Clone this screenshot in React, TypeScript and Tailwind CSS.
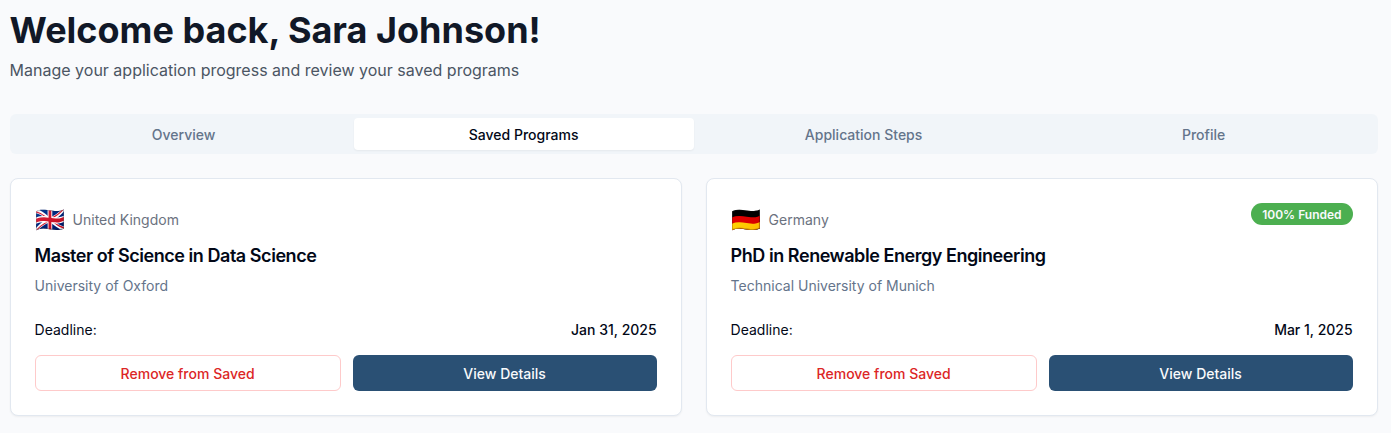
import React from "react";

type Program = {
  flag: string;
  country: string;
  title: string;
  university: string;
  deadline: string;
  badge?: string;
};

const programs: Program[] = [
  { flag: "🇬🇧", country: "United Kingdom", title: "Master of Science in Data Science", university: "University of Oxford", deadline: "Jan 31, 2025" },
  { flag: "🇩🇪", country: "Germany", title: "PhD in Renewable Energy Engineering", university: "Technical University of Munich", deadline: "Mar 1, 2025", badge: "100% Funded" },
];

const tabs = ["Overview", "Saved Programs", "Application Steps", "Profile"];

function ProgramCard({ program }: { program: Program }) {
  return (
    <article className="rounded-lg border border-[#e2e8f0] bg-white p-6 shadow-xs">
      <div className="flex items-start justify-between">
        <div className="flex h-[33px] items-center pt-px">
          <span className="mr-2 text-2xl leading-8">{program.flag}</span>
          <span className="text-sm text-[#6b7280]">{program.country}</span>
        </div>
        {program.badge && (
          <span className="rounded-full border border-transparent bg-[#4caf50] px-2.5 pt-[3px] pb-px text-xs font-semibold text-[#f8fafc]">{program.badge}</span>
        )}
      </div>
      <h3 className="mt-1.5 text-lg leading-7 font-semibold tracking-tight text-[#020817]">{program.title}</h3>
      <p className="mt-1.5 text-sm text-[#64748b]">{program.university}</p>
      <div className="mt-6 flex justify-between text-sm text-[#020817]">
        <span>Deadline:</span>
        <span className="font-medium">{program.deadline}</span>
      </div>
      <div className="mt-[15px] flex gap-3">
        <button className="h-9 flex-1 rounded-md border border-[#fecaca] bg-white pt-0.5 text-sm font-medium text-[#dc2626]">Remove from Saved</button>
        <button className="h-9 flex-1 rounded-md bg-[#2a5074] pt-0.5 text-sm font-medium text-[#f8fafc]">View Details</button>
      </div>
    </article>
  );
}

export default function App() {
  return (
    <main className="h-[433px] overflow-hidden bg-[#f9fafc] pr-[13.4px] pl-[9.6px] font-['Inter',sans-serif]">
      <h1 className="pt-[10.4px] text-4xl leading-10 font-bold text-[#111827]">Welcome back, Sara Johnson!</h1>
      <p className="mt-2 text-base text-[#4b5563]">Manage your application progress and review your saved programs</p>
      <nav className="mt-8 grid h-10 grid-cols-4 rounded-md bg-[#f1f5f9] p-1">
        {tabs.map((tab, index) => (
          <button key={tab} className={index === 1 ? "rounded-sm bg-white pt-0.5 text-sm font-medium text-[#020817] shadow-xs" : "rounded-sm pt-0.5 text-sm font-medium text-[#64748b]"}>
            {tab}
          </button>
        ))}
      </nav>
      <section className="mt-6 grid grid-cols-2 gap-6">
        {programs.map((program) => <ProgramCard key={program.title} program={program} />)}
      </section>
    </main>
  );
}
